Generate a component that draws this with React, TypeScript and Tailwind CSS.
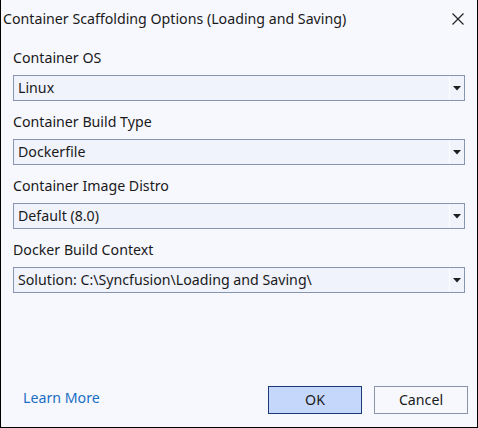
import React from "react";

function Combo({ value }: { value: string }) {
  return (
    <div className="flex h-[26px] items-stretch border border-[#8796b0] bg-[#f0f3fc]">
      <div className="flex flex-1 items-center pl-[4px] text-[14.2px] leading-[20px] text-[#1a1a1a]">{value}</div>
      <div className="flex w-[15px] items-center justify-center border-l border-l-[#ffffff]">
        <svg width="8" height="5" viewBox="0 0 8 5">
          <path d="M0 0 H8 L4 4.5 Z" fill="#1e1e1e" />
        </svg>
      </div>
    </div>
  );
}

function Group({ label, value }: { label: string; value: string }) {
  return (
    <div className="flex flex-col">
      <div className="h-[20px] text-[14.2px] leading-[20px] text-[#1a1a1a]">{label}</div>
      <div className="mt-[7px]">
        <Combo value={value} />
      </div>
    </div>
  );
}

export default function App() {
  return (
    <div
      className="flex h-[428px] w-[478px] flex-col border-b border-l border-r border-black bg-[#f7f8fe] text-[#1a1a1a]"
      style={{ fontFamily: '"Noto Sans", "Open Sans", sans-serif' }}
    >
      <div className="flex h-[37px] items-center justify-between pl-[2px] pr-[13px]">
        <div className="text-[14.2px] leading-[20px]">Container Scaffolding Options (Loading and Saving)</div>
        <svg width="12" height="12" viewBox="0 0 12 12">
          <path d="M0.5 0.5 L11.5 11.5 M11.5 0.5 L0.5 11.5" stroke="#222" strokeWidth="1.2" />
        </svg>
      </div>
      <div className="mt-[11px] flex flex-col gap-[11px] px-[12px]">
        <Group label="Container OS" value="Linux" />
        <Group label="Container Build Type" value="Dockerfile" />
        <Group label="Container Image Distro" value="Default (8.0)" />
        <Group label="Docker Build Context" value="Solution: C:\Syncfusion\Loading and Saving\" />
      </div>
      <div className="flex-1" />
      <div className="mb-[13px] flex h-[28px] items-center pl-[22px] pr-[9px]">
        <a className="mb-[4px] text-[14.2px] leading-[20px] text-[#1a6fc4]">Learn More</a>
        <div className="flex-1" />
        <button className="h-[28px] w-[94px] border border-[#1c3a7a] bg-[#c5d8fc] text-[14.2px] text-[#1a1a1a]">OK</button>
        <button className="ml-[12px] h-[28px] w-[94px] border border-[#8a94a8] bg-[#f7f8fe] text-[14.2px] text-[#1a1a1a]">Cancel</button>
      </div>
    </div>
  );
}
